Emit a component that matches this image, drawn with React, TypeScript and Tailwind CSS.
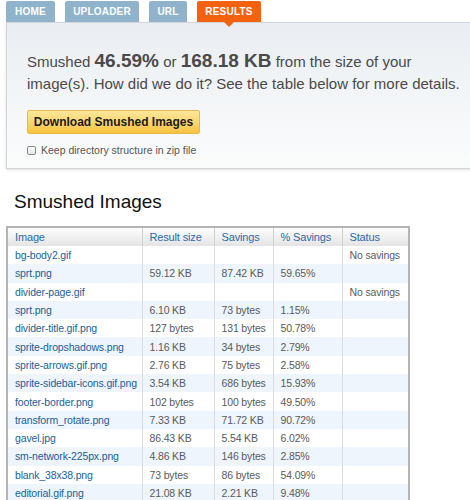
const tabs = [
  { label: 'HOME', w: 'w-[49px]' },
  { label: 'UPLOADER', w: 'w-[74px]' },
  { label: 'URL', w: 'w-[38px]' },
]

const rows: [string, string, string, string, string][] = [
  ['bg-body2.gif', '', '', '', 'No savings'],
  ['sprt.png', '59.12 KB', '87.42 KB', '59.65%', ''],
  ['divider-page.gif', '', '', '', 'No savings'],
  ['sprt.png', '6.10 KB', '73 bytes', '1.15%', ''],
  ['divider-title.gif.png', '127 bytes', '131 bytes', '50.78%', ''],
  ['sprite-dropshadows.png', '1.16 KB', '34 bytes', '2.79%', ''],
  ['sprite-arrows.gif.png', '2.76 KB', '75 bytes', '2.58%', ''],
  ['sprite-sidebar-icons.gif.png', '3.54 KB', '686 bytes', '15.93%', ''],
  ['footer-border.png', '102 bytes', '100 bytes', '49.50%', ''],
  ['transform_rotate.png', '7.33 KB', '71.72 KB', '90.72%', ''],
  ['gavel.jpg', '86.43 KB', '5.54 KB', '6.02%', ''],
  ['sm-network-225px.png', '4.86 KB', '146 bytes', '2.85%', ''],
  ['blank_38x38.png', '73 bytes', '86 bytes', '54.09%', ''],
  ['editorial.gif.png', '21.08 KB', '2.21 KB', '9.48%', ''],
]

const cols = ['w-[135px]', 'w-[72px]', 'w-[59px]', 'w-[69px]', 'w-[67px]']
const heads = ['Image', 'Result size', 'Savings', '% Savings', 'Status']

export default function App() {
  return (
    <div className="h-[500px] w-[470px] overflow-hidden bg-white font-['Liberation_Sans',Arial,sans-serif]">
      {/* tab strip */}
      <div className="flex h-[22px] items-end gap-[10px] pl-[6px] pt-[1px]">
        {tabs.map((t) => (
          <div
            key={t.label}
            className={`${t.w} flex h-[21px] items-center justify-center rounded-t-[2px] bg-[#8eb3ca] text-[10px] font-bold tracking-[0.2px] text-white`}
          >
            {t.label}
          </div>
        ))}
        <div className="relative flex h-[21px] w-[64px] items-center justify-center rounded-t-[2px] bg-[#f5620f] text-[10px] font-bold tracking-[0.2px] text-white">
          RESULTS
          <span className="absolute left-[27px] top-[21px] h-0 w-0 border-x-[5px] border-t-[5px] border-x-transparent border-t-[#f5620f]" />
        </div>
      </div>

      {/* results panel */}
      <div className="ml-[6px] w-[480px] border border-[#d3d6d9] bg-gradient-to-b from-[#eaeef2] to-[#fbfcfc] pb-[11px] pl-[20px] pt-[28px] shadow-[0_1px_3px_rgba(0,0,0,0.12)]">
        <p className="w-[445px] text-[15px] leading-[22px] text-[#4a4a4a]">
          Smushed <b className="text-[19px] leading-none text-[#4a4a4a]">46.59%</b> or{' '}
          <b className="text-[19px] leading-none text-[#4a4a4a]">168.18 KB</b> from the size of your image(s).
          How did we do it? See the table below for more details.
        </p>
        <button
          type="button"
          className="mt-[15px] flex h-[24px] w-[173px] items-center justify-center rounded-[2px] border border-[#e8b94a] bg-gradient-to-b from-[#fde79a] to-[#f8c43e] text-[12px] font-bold text-[#1a1a1a]"
        >
          Download Smushed Images
        </button>
        <label className="mt-[10px] flex items-center gap-[5px] text-[10.5px] leading-[13px] text-[#555]">
          <span className="h-[9px] w-[9px] rounded-[2px] border border-[#8a8a8a] bg-gradient-to-b from-white to-[#e6e6e6]" />
          Keep directory structure in zip file
        </label>
      </div>

      <h2 className="ml-[14px] mt-[21px] text-[19px] leading-[24px] text-[#111]">Smushed Images</h2>

      <table className="ml-[6px] mt-[12px] w-[402px] table-fixed border-collapse border-2 border-[#b4b4b4] text-[10.5px] tracking-[-0.15px]">
        <thead>
          <tr className="h-[19px] bg-gradient-to-b from-white to-[#e4e4e4]">
            {heads.map((h, i) => (
              <th
                key={h}
                className={`${cols[i]} whitespace-nowrap border-l border-[#d0d0d0] px-[7px] text-left text-[11px] font-normal text-[#2c6aa8] first:border-l-0`}
              >
                {h}
              </th>
            ))}
          </tr>
        </thead>
        <tbody>
          {rows.map((r, ri) => (
            <tr key={ri} className={`h-[18.3px] ${ri % 2 ? 'bg-[#eef5fc]' : 'bg-white'}`}>
              {r.map((c, ci) => (
                <td
                  key={ci}
                  className={`overflow-hidden whitespace-nowrap border-l border-[#d8dde2] px-[7px] py-0 leading-[18px] first:border-l-0 ${
                    ci === 0 ? 'text-[#215f9a]' : 'text-[#5a5a5a]'
                  }`}
                >
                  {c}
                </td>
              ))}
            </tr>
          ))}
        </tbody>
      </table>
    </div>
  )
}
